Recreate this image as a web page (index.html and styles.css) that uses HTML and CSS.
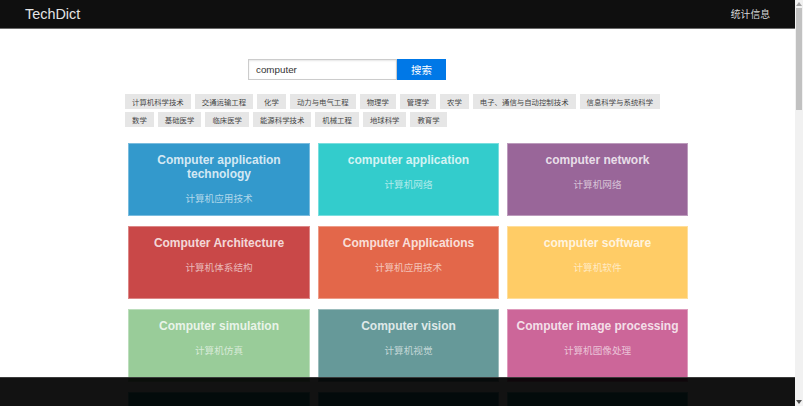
FILE: index.html
```html
<!DOCTYPE html>
<html lang="zh">
<head>
<meta charset="utf-8">
<title>TechDict</title>
<link rel="stylesheet" href="styles.css">
</head>
<body>
<header class="topbar">
  <a class="brand">TechDict</a>
  <a class="nav-link">统计信息</a>
</header>

<main class="main">
  <form class="search">
    <input class="search-input" type="text" value="computer">
    <button class="search-btn" type="button">搜索</button>
  </form>

  <div class="tags">
    <span class="tag">计算机科学技术</span>
    <span class="tag">交通运输工程</span>
    <span class="tag">化学</span>
    <span class="tag">动力与电气工程</span>
    <span class="tag">物理学</span>
    <span class="tag">管理学</span>
    <span class="tag">农学</span>
    <span class="tag">电子、通信与自动控制技术</span>
    <span class="tag">信息科学与系统科学</span>
    <span class="tag">数学</span>
    <span class="tag">基础医学</span>
    <span class="tag">临床医学</span>
    <span class="tag">能源科学技术</span>
    <span class="tag">机械工程</span>
    <span class="tag">地球科学</span>
    <span class="tag">教育学</span>
  </div>

  <div class="cards">
    <div class="card c-blue"><div class="en">Computer application technology</div><div class="zh">计算机应用技术</div></div>
    <div class="card c-teal"><div class="en">computer application</div><div class="zh">计算机网络</div></div>
    <div class="card c-purple"><div class="en">computer network</div><div class="zh">计算机网络</div></div>
    <div class="card c-red"><div class="en">Computer Architecture</div><div class="zh">计算机体系结构</div></div>
    <div class="card c-orange"><div class="en">Computer Applications</div><div class="zh">计算机应用技术</div></div>
    <div class="card c-yellow"><div class="en">computer software</div><div class="zh">计算机软件</div></div>
    <div class="card c-green"><div class="en">Computer simulation</div><div class="zh">计算机仿真</div></div>
    <div class="card c-slate"><div class="en">Computer vision</div><div class="zh">计算机视觉</div></div>
    <div class="card c-pink"><div class="en">Computer image processing</div><div class="zh">计算机图像处理</div></div>
    <div class="card c-dark1"></div>
    <div class="card c-dark2"></div>
    <div class="card c-dark1"></div>
  </div>
</main>

<footer class="footer"></footer>

<div class="scrollbar" aria-hidden="true">
  <div class="sb-btn sb-up">
    <svg width="6" height="4" viewBox="0 0 6 4"><polygon points="0,4 6,4 3,0" fill="#a3a3a3"/></svg>
  </div>
  <div class="sb-thumb"></div>
  <div class="sb-track"></div>
  <div class="sb-btn sb-down">
    <svg width="6" height="4" viewBox="0 0 6 4"><polygon points="0,0 6,0 3,4" fill="#505050"/></svg>
  </div>
</div>
</body>
</html>
```

FILE: styles.css
```css
html, body {
  margin: 0;
  padding: 0;
}

html {
  scrollbar-width: none;
}

body {
  min-height: 1552px;
  margin-right: 8px;
  background: #ffffff;
  font-family: "Liberation Sans", Arial, "Noto Sans CJK SC", sans-serif;
  color: #333;
}

.topbar {
  height: 28px;
  background: #0f0f0f;
  border-bottom: 1px solid #6a6a6a;
  display: flex;
  align-items: center;
  justify-content: space-between;
  padding: 0 25px 0 25px;
}

.brand {
  color: #e4e4e4;
  font-size: 14.4px;
  line-height: 28px;
}

.nav-link {
  color: #d8d8d8;
  font-family: "Noto Sans CJK SC", sans-serif;
  font-size: 9.8px;
  line-height: 28px;
}

.main {
  margin-left: 125px;
  width: 566px;
  padding-top: 30px;
}

.search {
  display: flex;
  margin: 0 0 0 123px;
  height: 21px;
}

.search-input {
  box-sizing: border-box;
  width: 149px;
  height: 21px;
  margin: 0;
  padding: 0 7px;
  border: 1px solid #cccccc;
  border-radius: 0;
  box-shadow: inset 0 1px 2px #e6e6e6;
  font-family: "Liberation Sans", Arial, sans-serif;
  font-size: 9.8px;
  color: #333;
  outline: none;
}

.search-btn {
  width: 49px;
  height: 21px;
  margin: 0;
  padding: 0;
  border: none;
  border-radius: 0;
  background: #0078e7;
  color: #ffffff;
  font-family: "Noto Sans CJK SC", sans-serif;
  font-size: 10.5px;
}

.tags {
  display: flex;
  flex-wrap: wrap;
  gap: 3px 4px;
  margin-top: 14px;
  width: 560px;
}

.tag {
  display: block;
  height: 15px;
  line-height: 15px;
  padding: 0 7px;
  background: #e6e6e6;
  color: rgba(0, 0, 0, 0.75);
  font-family: "Noto Sans CJK SC", sans-serif;
  font-size: 7.4px;
  white-space: nowrap;
}

.cards {
  display: grid;
  grid-template-columns: 182px 181px 181px;
  grid-auto-rows: 73px;
  column-gap: 8px;
  row-gap: 10px;
  margin-top: 16px;
  margin-left: 3px;
}

.card {
  box-sizing: border-box;
  border: 1px solid rgba(255, 255, 255, 0.35);
  padding: 9px 4px 0;
  text-align: center;
}

.en {
  font-family: "Liberation Sans", Arial, sans-serif;
  font-weight: bold;
  font-size: 12px;
  line-height: 14px;
  color: rgba(255, 255, 255, 0.8);
  padding: 0 6px;
}

.c-pink .en {
  padding: 0;
}

.zh {
  margin-top: 10px;
  font-family: "Noto Sans CJK SC", sans-serif;
  font-size: 9.6px;
  line-height: 14px;
  color: rgba(255, 255, 255, 0.62);
}

.c-blue { background: #3399cc; }
.c-teal { background: #33cccc; }
.c-purple { background: #996699; }
.c-red { background: #c94848; }
.c-orange { background: #e3674a; }
.c-yellow { background: #ffcc66; }
.c-green { background: #99cc99; }
.c-slate { background: #669999; }
.c-pink { background: #cc6699; }
.c-dark1 { background: #2a9d9d; }
.c-dark2 { background: #2a8f9a; }

.footer {
  position: fixed;
  left: 0;
  right: 8px;
  bottom: 0;
  height: 29px;
  background: rgba(0, 0, 0, 0.93);
  border-top: 1px solid rgba(90, 90, 90, 0.6);
  box-sizing: border-box;
}

.scrollbar {
  position: fixed;
  top: 0;
  right: 0;
  bottom: 0;
  width: 8px;
  background: #f1f1f1;
  display: flex;
  flex-direction: column;
}

.sb-btn {
  height: 8px;
  display: flex;
  align-items: center;
  justify-content: center;
}

.sb-btn svg {
  display: block;
}

.sb-thumb {
  height: 102px;
  margin: 0 1px;
  background: #c1c1c1;
}

.sb-track {
  flex: 1;
}
```
